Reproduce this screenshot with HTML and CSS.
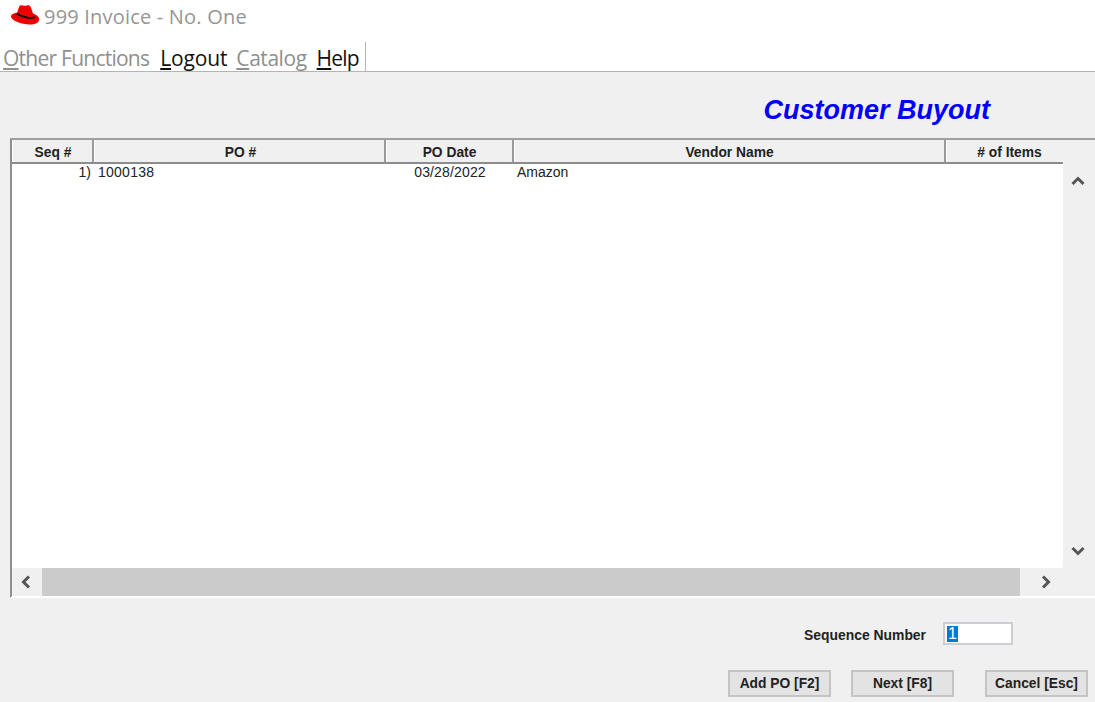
FILE: index.html
```html
<!DOCTYPE html>
<html lang="en">
<head>
<meta charset="utf-8">
<title>999 Invoice - No. One</title>
<link rel="stylesheet" href="styles.css">
</head>
<body>
<div class="top">
  <div class="titlebar">
    <svg class="hat" width="30" height="24" viewBox="0 0 30 24">
      <path d="M1 13C1.500 11 5 10 7 9.800L9 4.300C9.500 2.500 11 2 12.500 2.500C14 3 16 3 17.500 2.300C19.500 1.800 20.500 3 21 4.500L23 10.500C26 11.500 29.200 13.500 29.200 16.200C29.200 19.500 25 21.500 20 21.500C12 21.500 .6 17.500 1 13Z" fill="#ee0000"/>
      <path d="M6.800 10.700C10 12.700 13 14.300 18 14.800C21 15 24 14.800 25 14" fill="none" stroke="#111" stroke-width="2"/>
    </svg>
    <span class="apptitle">999 Invoice - No. One</span>
  </div>
  <nav class="menu">
    <span class="mi dim other"><u>O</u>ther Functions</span>
    <span class="mi logout"><u>L</u>ogout</span>
    <span class="mi dim catalog"><u>C</u>atalog</span>
    <span class="mi help"><u>H</u>elp</span>
  </nav>
</div>
<main class="main">
  <h1 class="heading">Customer Buyout</h1>
  <section class="frame">
    <div class="upper">
      <div class="grid">
        <div class="thead">
          <div class="th c1">Seq #</div>
          <div class="th c2">PO #</div>
          <div class="th c3">PO Date</div>
          <div class="th c4">Vendor Name</div>
          <div class="th c5">&#35; of Items</div>
        </div>
        <div class="tbody">
          <div class="tr">
            <div class="td c1 num">1)</div>
            <div class="td c2">1000138</div>
            <div class="td c3 ctr">03/28/2022</div>
            <div class="td c4">Amazon</div>
          </div>
        </div>
      </div>
      <div class="vbar">
        <svg class="chev" width="14" height="10" viewBox="0 0 14 10"><path d="M1.500 8 7 2.500 12.500 8" fill="none" stroke="#555" stroke-width="3"/></svg>
        <svg class="chev" width="14" height="10" viewBox="0 0 14 10"><path d="M1.500 2 7 7.500 12.500 2" fill="none" stroke="#555" stroke-width="3"/></svg>
      </div>
    </div>
    <div class="hbar">
      <div class="arrow"><svg width="10" height="14" viewBox="0 0 10 14"><path d="M8 1.500 2.500 7 8 12.500" fill="none" stroke="#555" stroke-width="3"/></svg></div>
      <div class="thumb"></div>
      <div class="arrow right"><svg width="10" height="14" viewBox="0 0 10 14"><path d="M2 1.500 7.500 7 2 12.500" fill="none" stroke="#555" stroke-width="3"/></svg></div>
    </div>
  </section>
  <div class="seq">
    <label class="seqlabel">Sequence Number</label>
    <div class="input"><span class="sel">1</span></div>
  </div>
  <div class="buttons">
    <button class="btn b1">Add PO [F2]</button>
    <button class="btn b2">Next [F8]</button>
    <button class="btn">Cancel [Esc]</button>
  </div>
</main>
</body>
</html>
```
FILE: styles.css
```css
* { box-sizing: border-box; }
html, body { margin: 0; padding: 0; }
body {
  width: 1095px;
  height: 702px;
  overflow: hidden;
  background: #f0f0f0;
  font-family: "Liberation Sans", Arial, sans-serif;
  color: #111;
}
.top {
  height: 72px;
  background: #fff;
  border-bottom: 1px solid #b4b4b4;
  display: flex;
  flex-direction: column;
}
.titlebar {
  height: 42px;
  display: flex;
  align-items: flex-start;
  padding: 3px 0 0 10px;
}
.hat { flex: none; }
.apptitle {
  font-family: "Open Sans", sans-serif;
  font-size: 20px;
  line-height: 28px;
  color: #959595;
  margin-left: 4px;
  letter-spacing: .2px;
}
.menu {
  height: 29px;
  display: inline-flex;
  align-self: flex-start;
  padding: 0 6px 0 3px;
  gap: 9px;
  border-right: 1px solid #b4b4b4;
}
.mi {
  font-family: "Open Sans", sans-serif;
  font-size: 21px;
  line-height: 32px;
  color: #111;
}
.mi.dim { color: #8f8f8f; }
.mi.other { letter-spacing: -.75px; }
.mi.logout { margin-left: 2px; letter-spacing: -.15px; }
.mi.catalog { letter-spacing: -.45px; }
.mi.help { margin-left: 1px; letter-spacing: -.8px; }
.main { display: flex; flex-direction: column; }
.heading {
  margin: 0;
  height: 66px;
  padding: 22px 105px 0 0;
  text-align: right;
  font-size: 27px;
  line-height: 32px;
  font-style: italic;
  font-weight: bold;
  color: #0000ff;
}
.frame {
  margin-left: 10px;
  height: 460px;
  border-top: 2px solid #a0a0a0;
  border-left: 2px solid #8e8e8e;
  border-bottom: 2px solid #fff;
  display: flex;
  flex-direction: column;
}
.upper { height: 428px; display: flex; }
.grid { width: 1051px; display: flex; flex-direction: column; }
.thead {
  height: 24px;
  display: flex;
  border-bottom: 2px solid #8c8c8c;
}
.th {
  font-size: 13.800px;
  font-weight: bold;
  line-height: 25px;
  text-align: center;
  border-right: 2px solid #9a9a9a;
  border-left: 1px solid #fff;
  color: #222;
}
.th.c1 { padding-left: 1px; }
.th.c2 { padding-left: 2px; }
.th.c5 { border-right: 0; padding-left: 9px; }
.c1 { width: 82px; flex: none; }
.c2 { width: 292px; flex: none; }
.c3 { width: 128px; flex: none; }
.c4 { width: 432px; flex: none; }
.c5 { width: 117px; flex: none; }
.tbody { flex: 1; background: #fff; border-radius: 0 0 2px 0; }
.tr { display: flex; height: 17px; }
.td { font-size: 14px; line-height: 17px; padding-left: 5px; color: #222; }
.td.num { text-align: right; padding: 0 3px 0 0; }
.td.ctr { text-align: center; padding: 0; letter-spacing: .15px; }
.td.c2 { padding-left: 4px; letter-spacing: .25px; }
.td.c4 { padding-left: 3px; }
.vbar {
  flex: 1;
  display: flex;
  flex-direction: column;
  justify-content: space-between;
  align-items: center;
  padding: 36px 2px 12px 0;
}
.hbar {
  height: 28px;
  display: flex;
  align-items: stretch;
}
.arrow {
  width: 30px;
  flex: none;
  display: flex;
  align-items: center;
  justify-content: center;
  padding-right: 2px;
}
.arrow.right { width: 51px; padding-right: 0; }
.thumb { width: 978px; flex: none; background: #cbcbcb; }
.seq {
  height: 72px;
  display: flex;
  align-items: flex-start;
  justify-content: flex-end;
  padding: 24px 82px 0 0;
  gap: 17px;
}
.seqlabel { font-size: 13.900px; font-weight: bold; line-height: 26px; color: #222; }
.input {
  width: 70px;
  height: 23px;
  background: #fff;
  border: 2px solid #ccced4;
  padding: 2px 0 0 2px;
  font-size: 16px;
  line-height: 16px;
}
.sel { display: block; width: 11px; height: 16px; background: #0078d7; color: #fff; text-align: center; }
.buttons {
  display: flex;
  justify-content: flex-end;
  padding-right: 7px;
  gap: 20px;
}
.btn {
  width: 103px;
  height: 27px;
  padding: 0;
  background: #e3e3e3;
  border: 2px solid #c4c4c4;
  font-family: "Liberation Sans", Arial, sans-serif;
  font-size: 13.800px;
  font-weight: bold;
  color: #222;
}
.btn.b2 { margin-right: 11px; }
```
